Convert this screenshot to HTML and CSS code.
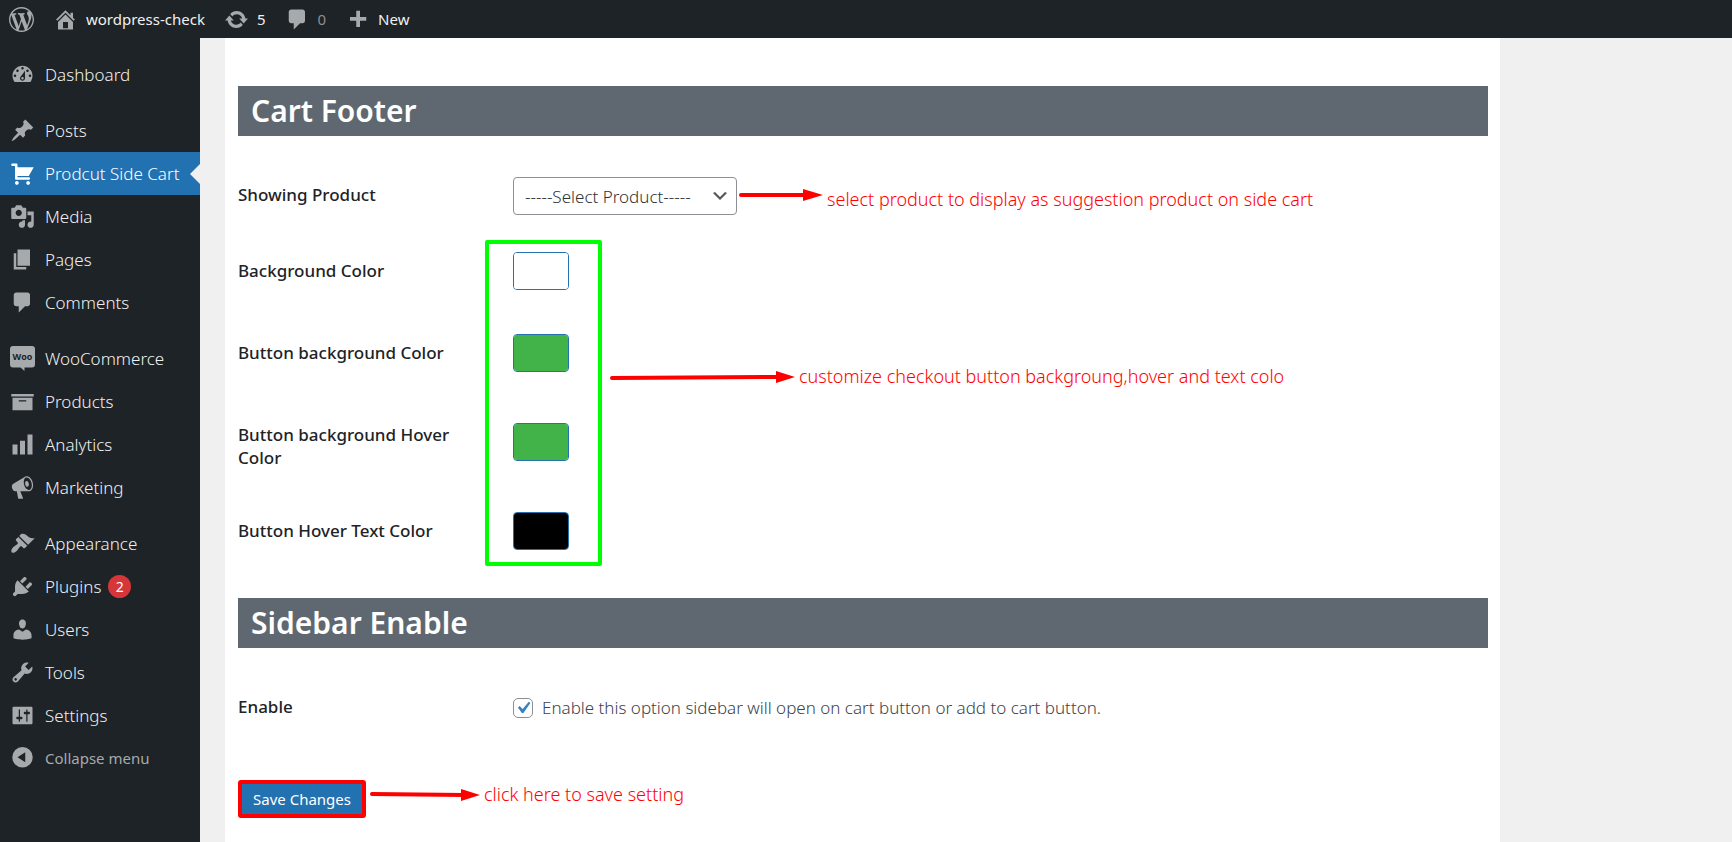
FILE: index.html
```html
<!DOCTYPE html>
<html lang="en">
<head>
<meta charset="utf-8">
<title>Product Side Cart</title>
<link rel="stylesheet" href="styles.css">
</head>
<body>
<header class="adminbar">
  <a class="bar-item" href="#" aria-label="About WordPress"><svg class="bar-icon logo" viewBox="0 0 20 20"><path d="M20 10c0-5.51-4.49-10-10-10C4.48 0 0 4.49 0 10c0 5.52 4.48 10 10 10 5.51 0 10-4.48 10-10zM7.78 15.37L4.37 6.22c.55-.02 1.17-.08 1.17-.08.5-.06.44-1.13-.06-1.11 0 0-1.45.11-2.37.11-.18 0-.37 0-.58-.01C4.12 2.69 6.87 1.11 10 1.11c2.33 0 4.45.87 6.05 2.34-.68-.11-1.65.39-1.65 1.58 0 .74.45 1.36.9 2.1.35.61.55 1.36.55 2.46 0 1.49-1.4 5-1.4 5l-3.03-8.37c.54-.02.82-.17.82-.17.5-.05.44-1.25-.06-1.22 0 0-1.44.12-2.38.12-.87 0-2.33-.12-2.33-.12-.5-.03-.56 1.2-.06 1.22l.92.08 1.26 3.41zM17.41 10c.24-.64.74-1.87.43-4.25.7 1.29 1.05 2.71 1.05 4.25 0 3.29-1.73 6.24-4.4 7.78.97-2.59 1.94-5.2 2.92-7.78zM6.1 18.09C3.12 16.65 1.11 13.53 1.11 10c0-1.3.23-2.48.72-3.59C3.25 10.3 4.67 14.2 6.1 18.09zm4.03-6.63l2.58 6.98c-.86.29-1.76.45-2.71.45-.79 0-1.57-.11-2.29-.33.81-2.38 1.62-4.74 2.42-7.1z"/></svg></a>
  <a class="bar-item" href="#"><svg class="bar-icon" viewBox="0 0 20 20"><path d="M16 8.5l1.53 1.53-1.06 1.06L10 4.6l-6.47 6.49-1.06-1.06L10 2.5l4 4v-2h2v4zm-6-2.46l6 5.99V18H4v-5.97zM12 17v-5H8v5h4z"/></svg><span>wordpress-check</span></a>
  <a class="bar-item" href="#"><svg class="bar-icon" viewBox="0 0 20 20"><path d="M10.2 3.28c3.53 0 6.43 2.61 6.92 6h2.08l-3.5 4-3.5-4h2.32c-.45-1.97-2.21-3.45-4.32-3.45-1.45 0-2.73.71-3.54 1.78L4.95 5.66C6.23 4.2 8.11 3.28 10.2 3.28zm-.4 13.44c-3.52 0-6.43-2.61-6.92-6H.8l3.5-4c1.17 1.33 2.33 2.67 3.5 4H5.48c.45 1.97 2.21 3.45 4.32 3.45 1.45 0 2.73-.71 3.54-1.78l1.71 1.95c-1.28 1.46-3.15 2.38-5.25 2.38z"/></svg><span>5</span></a>
  <a class="bar-item" href="#"><svg class="bar-icon" viewBox="0 0 20 20"><path d="M5 2h9c1.1 0 2 .9 2 2v7c0 1.1-.9 2-2 2h-2l-5 5v-5H5c-1.1 0-2-.9-2-2V4c0-1.1.9-2 2-2z"/></svg><span class="dim">0</span></a>
  <a class="bar-item" href="#"><svg class="bar-icon" viewBox="0 0 20 20"><path d="M17 8v3h-5v5H9v-5H4V8h5V3h3v5h5z"/></svg><span>New</span></a>
</header>
<div class="layout">
  <nav class="sidebar" aria-label="Main menu">
    <ul class="menu">
      <li><a class="menu-link" href="#"><svg class="menu-icon" viewBox="0 0 20 20"><path d="M3.76 16h12.48c1.1-1.37 1.76-3.11 1.76-5 0-4.42-3.58-8-8-8s-8 3.58-8 8c0 1.89.66 3.63 1.76 5zM10 4c.55 0 1 .45 1 1s-.45 1-1 1-1-.45-1-1 .45-1 1-1zM6 6c.55 0 1 .45 1 1s-.45 1-1 1-1-.45-1-1 .45-1 1-1zm8 0c.55 0 1 .45 1 1s-.45 1-1 1-1-.45-1-1 .45-1 1-1zm-5.37 5.55L12 7v6c0 1.1-.9 2-2 2s-2-.9-2-2c0-.57.24-1.08.63-1.45zM4 10c.55 0 1 .45 1 1s-.45 1-1 1-1-.45-1-1 .45-1 1-1zm12 0c.55 0 1 .45 1 1s-.45 1-1 1-1-.45-1-1 .45-1 1-1zm-5 3c0-.55-.45-1-1-1s-1 .45-1 1 .45 1 1 1 1-.45 1-1z"/></svg>Dashboard</a></li>
    </ul>
    <ul class="menu">
      <li><a class="menu-link" href="#"><svg class="menu-icon" viewBox="0 0 20 20"><path d="M10.44 3.02l1.82-1.82 6.36 6.35-1.83 1.82c-1.05-.68-2.48-.57-3.41.36l-.75.75c-.92.93-1.04 2.35-.35 3.41l-1.83 1.82-2.41-2.41-2.8 2.79c-.42.42-3.38 2.71-3.8 2.29s1.86-3.39 2.28-3.81l2.79-2.79L4.1 9.36l1.83-1.82c1.05.69 2.48.57 3.4-.36l.75-.75c.93-.92 1.05-2.35.36-3.41z"/></svg>Posts</a></li>
      <li><a class="menu-link current" href="#" aria-current="page"><svg class="menu-icon" viewBox="0 0 20 20"><path d="M6 13h9c.55 0 1 .45 1 1s-.45 1-1 1H5c-.55 0-1-.45-1-1V4H2c-.55 0-1-.45-1-1s.45-1 1-1h3c.55 0 1 .45 1 1v2h13l-4 7H6v1zm-.5 3c.83 0 1.5.67 1.5 1.5S6.33 19 5.5 19 4 18.33 4 17.5 4.67 16 5.5 16zm9 0c.83 0 1.5.67 1.5 1.5s-.67 1.5-1.5 1.5-1.5-.67-1.5-1.5.67-1.5 1.5-1.5z"/></svg>Prodcut Side Cart</a></li>
      <li><a class="menu-link" href="#"><svg class="menu-icon" viewBox="0 0 20 20"><path d="M13 11V4c0-.55-.45-1-1-1h-1.67L9 1H5L3.67 3H2c-.55 0-1 .45-1 1v7c0 .55.45 1 1 1h10c.55 0 1-.45 1-1zM7 4.5c1.38 0 2.5 1.12 2.5 2.5S8.38 9.5 7 9.5 4.5 8.38 4.5 7 5.62 4.5 7 4.5zM14 6h5v10.5c0 1.38-1.12 2.5-2.5 2.5S14 17.88 14 16.5s1.12-2.5 2.5-2.5c.17 0 .34.02.5.05V9h-3V6zm-4 8.05V13h2v3.5c0 1.38-1.12 2.5-2.5 2.5S7 17.88 7 16.5 8.12 14 9.5 14c.17 0 .34.02.5.05z"/></svg>Media</a></li>
      <li><a class="menu-link" href="#"><svg class="menu-icon" viewBox="0 0 20 20"><path d="M6 15V2h10v13H6zm-1 1h8v2H3V5h2v11z"/></svg>Pages</a></li>
      <li><a class="menu-link" href="#"><svg class="menu-icon" viewBox="0 0 20 20"><path d="M5 2h9c1.1 0 2 .9 2 2v7c0 1.1-.9 2-2 2h-2l-5 5v-5H5c-1.1 0-2-.9-2-2V4c0-1.1.9-2 2-2z"/></svg>Comments</a></li>
    </ul>
    <ul class="menu">
      <li><a class="menu-link" href="#"><svg class="menu-icon" viewBox="0 0 25 25" aria-hidden="true"><path d="M3 0h19q3 0 3 3v15.500q0 3-3 3h-7.500v3.500l-4-3.500H3q-3 0-3-3V3q0-3 3-3z"/><text class="woo-mark" x="12.500" y="14" text-anchor="middle">Woo</text></svg>WooCommerce</a></li>
      <li><a class="menu-link" href="#"><svg class="menu-icon" viewBox="0 0 20 20"><path d="M19 4v2H1V4h18zM2 7h16v10H2V7zm11 3V9H7v1h6z"/></svg>Products</a></li>
      <li><a class="menu-link" href="#"><svg class="menu-icon" viewBox="0 0 20 20"><path d="M18 18V2h-4v16h4zm-6 0V7H8v11h4zm-6 0v-8H2v8h4z"/></svg>Analytics</a></li>
      <li><a class="menu-link" href="#"><svg class="menu-icon" viewBox="0 0 20 20"><path d="M18.150 5.940c.46 1.620.38 3.220-.02 4.480-.42 1.280-1.260 2.180-2.300 2.480-.16.06-.26.06-.4.06-.06.02-.12.02-.18.02-.06.02-.14.02-.22.02h-6.800l2.220 5.500c.02.14-.06.26-.14.34-.08.1-.24.16-.34.16H6.950c-.1 0-.26-.06-.34-.16-.08-.08-.16-.2-.14-.34l-1-5.500H4.250l-.02-.02c-.5.06-1.080-.18-1.540-.62s-.88-1.080-1.060-1.880c-.24-.8-.2-1.560-.02-2.200.18-.62.58-1.080 1.060-1.300l.02-.02 9-5.400c.1-.06.18-.1.24-.16.06-.04.14-.08.24-.12.16-.08.28-.12.5-.18 1.040-.3 2.240.1 3.220.98s1.840 2.240 2.260 3.860zm-2.580 5.980h-.02c.4-.1.74-.34 1.040-.7.58-.7.86-1.760.86-3.040 0-.64-.1-1.300-.28-1.980-.34-1.360-1.020-2.500-1.780-3.240s-1.680-1.100-2.460-.88c-.82.22-1.400.96-1.700 2-.32 1.040-.28 2.360.06 3.720.38 1.360 1 2.500 1.800 3.240.78.74 1.620 1.100 2.480.88zm-2.540-7.080c.22-.04.42-.02.62.04.38.16.76.48 1.020 1s.42 1.200.42 1.780c0 .3-.04.56-.12.8-.18.48-.44.84-.86.94-.34.1-.8-.06-1.140-.4s-.64-.86-.78-1.500c-.18-.62-.12-1.240.02-1.720s.48-.84.82-.94z"/></svg>Marketing</a></li>
    </ul>
    <ul class="menu">
      <li><a class="menu-link" href="#"><svg class="menu-icon" viewBox="0 0 20 20"><path d="M14.48 11.06L7.41 3.99l1.500-1.500c.5-.56 2.300-.47 3.510.32 1.210.8 1.430 1.280 2.910 2.100 1.180.64 2.450 1.260 4.450.85zm-.71.71L6.700 4.700 4.930 6.470c-.39.39-.39 1.020 0 1.410l1.060 1.060c.39.39.39 1.030 0 1.420-.6.6-1.430 1.110-2.210 1.690-.35.26-.7.53-1.010.84C1.430 14.230.4 16.080 1.400 17.070c.99 1 2.840-.03 4.180-1.360.31-.31.58-.66.85-1.020.57-.78 1.080-1.610 1.690-2.210.39-.39 1.020-.39 1.410 0l1.060 1.060c.39.39 1.020.39 1.410 0z"/></svg>Appearance</a></li>
      <li><a class="menu-link" href="#"><svg class="menu-icon" viewBox="0 0 20 20"><path d="M13.11 4.360L9.870 7.600 8 5.730l3.240-3.240c.35-.34 1.050-.2 1.560.32.52.51.66 1.210.31 1.550zm-8 1.770l.91-1.120 9.010 9.010-1.190.84c-.71.71-2.630 1.160-3.820 1.160H6.140L4.900 17.260c-.59.59-1.540.59-2.120 0-.59-.58-.59-1.530 0-2.120l1.240-1.240v-3.880c0-1.130.4-3.190 1.090-3.890zm7.260 3.970l3.240-3.240c.34-.35 1.040-.21 1.550.31.52.51.66 1.210.31 1.550l-3.240 3.250z"/></svg>Plugins<span class="count">2</span></a></li>
      <li><a class="menu-link" href="#"><svg class="menu-icon" viewBox="0 0 20 20"><path d="M10 9.250c-2.270 0-2.730-3.440-2.730-3.440C7 4.020 7.820 2 9.970 2c2.160 0 2.980 2.020 2.710 3.810 0 0-.41 3.440-2.680 3.440zm0 2.570L12.720 10c2.390 0 4.520 2.330 4.520 4.530v2.490s-3.650 1.130-7.240 1.130c-3.650 0-7.240-1.130-7.240-1.130v-2.490c0-2.250 1.940-4.480 4.470-4.480z"/></svg>Users</a></li>
      <li><a class="menu-link" href="#"><svg class="menu-icon" viewBox="0 0 20 20"><path d="M16.68 9.770c-1.340 1.340-3.300 1.670-4.950.99l-5.410 6.520c-.99.99-2.590.99-3.580 0s-.99-2.590 0-3.570l6.520-5.420c-.68-1.650-.35-3.610.99-4.950 1.280-1.280 3.120-1.620 4.720-1.060l-2.890 2.890 2.820 2.820 2.860-2.870c.53 1.580.18 3.390-1.080 4.650zM3.810 16.210c.4.39 1.040.39 1.430 0 .4-.4.4-1.040 0-1.430-.39-.4-1.030-.4-1.430 0-.39.39-.39 1.030 0 1.430z"/></svg>Tools</a></li>
      <li><a class="menu-link" href="#"><svg class="menu-icon" viewBox="0 0 20 20"><path d="M18 16V4c0-.55-.45-1-1-1H3c-.55 0-1 .45-1 1v12c0 .55.45 1 1 1h14c.55 0 1-.45 1-1zM8 11h1c.55 0 1 .45 1 1s-.45 1-1 1H8v1.500c0 .28-.22.5-.5.5s-.5-.22-.5-.5V13H6c-.55 0-1-.45-1-1s.45-1 1-1h1V5.500c0-.28.22-.5.5-.5s.5.22.5.5V11zm5-2h-1c-.55 0-1-.45-1-1s.45-1 1-1h1V5.500c0-.28.22-.5.5-.5s.5.22.5.5V7h1c.55 0 1 .45 1 1s-.45 1-1 1h-1v5.500c0 .28-.22.5-.5.5s-.5-.22-.5-.5V9z"/></svg>Settings</a></li>
      <li><button class="menu-link collapse" type="button"><svg class="menu-icon" viewBox="0 0 20 20"><path fill-rule="evenodd" d="M10 .8a8.200 8.200 0 1 0 0 16.400A8.200 8.200 0 0 0 10 .8zM12.200 5v8L6 9z"/></svg>Collapse menu</button></li>
    </ul>
  </nav>
  <main class="content">
    <form class="panel">
      <h2 class="section-title">Cart Footer</h2>
      <div class="fields">
        <div class="row">
          <label class="label" for="product">Showing Product</label>
          <div class="control">
            <span class="select-wrap">
              <select class="select" id="product"><option>-----Select Product-----</option></select>
              <svg class="chevron" viewBox="0 0 20 20"><path d="M5 6l5 5 5-5 2 1-7 7-7-7 2-1z"/></svg>
            </span>
          </div>
          <p class="note note-product"><svg class="arrow" width="84" height="14" viewBox="0 0 84 14"><path d="M2 7H66" /><path class="head" d="M64 1L84 7 64 13z"/></svg>select product to display as suggestion product on side cart</p>
        </div>
        <div class="row">
          <label class="label" for="bg">Background Color</label>
          <div class="control tall"><input class="swatch" type="color" id="bg" value="#ffffff"></div>
        </div>
        <div class="row">
          <label class="label" for="btn-bg">Button background Color</label>
          <div class="control tall"><input class="swatch" type="color" id="btn-bg" value="#41b349"></div>
          <p class="note note-colors"><svg class="arrow" width="185" height="14" viewBox="0 0 185 14"><path d="M2 8L168 7"/><path class="head" d="M166 1L185 7 166 13z"/></svg>customize checkout button backgroung,hover and text colo</p>
        </div>
        <div class="row">
          <label class="label" for="btn-hover">Button background Hover Color</label>
          <div class="control tall"><input class="swatch" type="color" id="btn-hover" value="#41b349"></div>
        </div>
        <div class="row">
          <label class="label" for="btn-text">Button Hover Text Color</label>
          <div class="control tall"><input class="swatch" type="color" id="btn-text" value="#000000"></div>
        </div>
        <div class="highlight"></div>
      </div>
      <h2 class="section-title">Sidebar Enable</h2>
      <div class="fields">
        <div class="row">
          <span class="label">Enable</span>
          <div class="control"><label class="check"><input class="checkbox" type="checkbox" checked>Enable this option sidebar will open on cart button or add to cart button.</label></div>
        </div>
      </div>
      <div class="actions">
        <button class="save" type="button">Save Changes</button>
        <p class="note note-save"><svg class="arrow" width="110" height="14" viewBox="0 0 110 14"><path d="M2 6L94 7"/><path class="head" d="M91 1L110 7 91 13z"/></svg>click here to save setting</p>
      </div>
    </form>
  </main>
</div>
</body>
</html>
```
FILE: styles.css
```css
* { box-sizing: border-box; }

body {
  margin: 0;
  height: 100vh;
  display: flex;
  flex-direction: column;
  overflow: hidden;
  background: #f0f0f1;
  color: #3c434a;
  font: 350 17px/23px "Segoe UI", "Noto Sans", "Open Sans", sans-serif;
}

a { text-decoration: none; }

/* Top bar */
.adminbar {
  flex: none;
  display: flex;
  align-items: center;
  gap: 19px;
  height: 38px;
  padding: 0 9px;
  background: #1d2327;
  font-size: 15px;
  font-weight: 400;
}
.bar-item {
  display: flex;
  align-items: center;
  gap: 8px;
  color: #f0f0f1;
}
.bar-icon {
  width: 25px;
  height: 25px;
  fill: #a7aaad;
}
.dim { color: #8c8f94; }

/* Side menu */
.layout {
  flex: 1;
  display: flex;
  min-height: 0;
}
.sidebar {
  flex: none;
  display: flex;
  flex-direction: column;
  gap: 13px;
  width: 200px;
  padding-top: 15px;
  background: #1d2327;
}
.menu {
  margin: 0;
  padding: 0;
  list-style: none;
}
.menu-link {
  position: relative;
  display: flex;
  align-items: center;
  width: 100%;
  height: 43px;
  padding: 0 10px;
  border: 0;
  background: none;
  color: #f0f0f1;
  font: inherit;
  white-space: nowrap;
}
.menu-icon {
  flex: none;
  width: 25px;
  height: 25px;
  margin-right: 10px;
  fill: #a7aaad;
}
.woo-mark {
  fill: #1d2327;
  font: bold 9px "Open Sans", sans-serif;
}
.current {
  background: #2271b1;
  color: #fff;
}
.current .menu-icon { fill: #fff; }
.current::after {
  content: "";
  position: absolute;
  right: 0;
  top: 12px;
  border: 10px solid transparent;
  border-left: 0;
  border-right-color: #f0f0f1;
}
.count {
  width: 23px;
  height: 23px;
  margin-left: 7px;
  border-radius: 50%;
  background: #d63638;
  color: #fff;
  font-size: 14px;
  font-weight: 400;
  line-height: 23px;
  text-align: center;
}
.collapse {
  color: #a7aaad;
  font-size: 15px;
  font-weight: 400;
}

/* Settings panel */
.content {
  flex: 1;
  display: flex;
  min-width: 0;
  padding-left: 25px;
}
.panel {
  flex: 1;
  max-width: 1275px;
  padding: 48px 12px 0 13px;
  background: #fff;
}
.section-title {
  margin: 0;
  padding: 0 13px;
  background: #5f6870;
  color: #fff;
  font-size: 30px;
  font-weight: 600;
  line-height: 50px;
}
.fields {
  position: relative;
  padding: 22px 0;
}
.row {
  position: relative;
  display: grid;
  grid-template-columns: 275px 1fr;
  align-items: start;
}
.label {
  padding: 25px 45px 25px 0;
  color: #1d2327;
  font-weight: 500;
}
.control {
  align-self: center;
  padding: 19px 0;
}
.tall { padding: 18px 0 26px; }
.select-wrap {
  position: relative;
  display: inline-block;
  vertical-align: top;
}
.select {
  display: block;
  width: 224px;
  height: 38px;
  padding: 0 30px 0 11px;
  appearance: none;
  border: 1px solid #8c8f94;
  border-radius: 4px;
  background: #fff;
  color: #2c3338;
  font: inherit;
}
.chevron {
  position: absolute;
  right: 7px;
  top: 9px;
  width: 20px;
  height: 20px;
  fill: #555;
  pointer-events: none;
}
.swatch {
  display: block;
  width: 56px;
  height: 38px;
  padding: 0;
  appearance: none;
  border: 1px solid #2271b1;
  border-radius: 4px;
  overflow: hidden;
}
.swatch::-webkit-color-swatch-wrapper { padding: 0; }
.swatch::-webkit-color-swatch { border: 0; }
.check {
  display: flex;
  align-items: center;
  gap: 9px;
  height: 37px;
}
.checkbox {
  width: 20px;
  height: 20px;
  margin: 0;
  appearance: none;
  border: 1px solid #8c8f94;
  border-radius: 5px;
  background: #fff;
}
.checkbox:checked {
  background: #fff url("data:image/svg+xml,%3Csvg xmlns='http://www.w3.org/2000/svg' viewBox='0 0 20 20'%3E%3Cpath d='M14.830 4.890l1.340.94-5.810 8.380H9.020L5.780 9.670l1.340-1.250 2.570 2.400z' fill='%233582c4'/%3E%3C/svg%3E") center / 24px no-repeat;
}
.actions {
  position: relative;
  margin-top: 13px;
}
.save {
  height: 38px;
  width: 128px;
  padding: 0;
  border: 4px solid #f00;
  border-radius: 3px;
  background: #2271b1;
  color: #fff;
  font: inherit;
  font-size: 15px;
  font-weight: 400;
}

/* Annotations drawn over the panel */
.note {
  position: absolute;
  display: flex;
  align-items: center;
  gap: 4px;
  margin: 0;
  color: #f00;
  font-size: 18px;
  white-space: nowrap;
}
.arrow {
  fill: none;
  stroke: #f00;
  stroke-width: 4;
  stroke-linecap: round;
}
.head {
  fill: #f00;
  stroke: none;
}
.note-product {
  left: 501px;
  top: 30px;
  align-items: flex-start;
}
.note-colors { left: 372px; top: 49px; }
.note-save { left: 132px; top: 3px; }
.highlight {
  position: absolute;
  left: 247px;
  top: 104px;
  bottom: 32px;
  width: 117px;
  border: 4px solid #0f0;
  border-radius: 2px;
  pointer-events: none;
}
```
